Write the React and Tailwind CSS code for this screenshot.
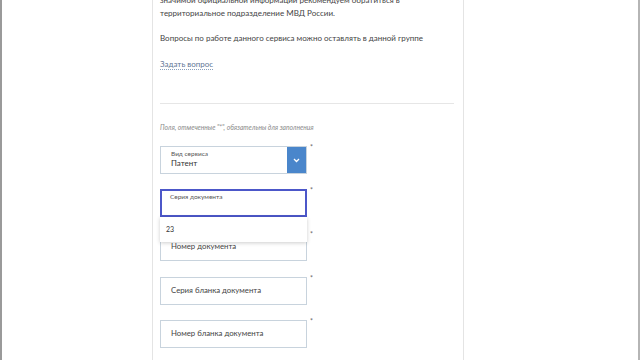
import React from 'react';

const font = { fontFamily: 'Lato, "Noto Sans", sans-serif' };

function Star() {
  return <span className="ml-[3px] -mt-[2px] text-[7px] leading-none text-[#666]">*</span>;
}

function Field({ label, className = '' }) {
  return (
    <div className={`flex items-start ${className}`}>
      <div className="w-[147px] h-[28px] border border-[#c8d3dd] bg-white flex items-center pl-[10px] text-[7.8px] text-[#444]">
        {label}
      </div>
      <Star />
    </div>
  );
}

export default function App() {
  return (
    <div className="w-[640px] h-[360px] overflow-hidden bg-white flex" style={font}>
      <div className="w-[152px] h-full border-l-2 border-[#9a9a9a]" />

      <div className="w-[312px] h-full border-l border-r border-[#e4e4e4] pl-[7px] pr-[9px] flex flex-col text-[#444]">
        <p className="mt-[-6px] text-[8px] leading-[13px] whitespace-nowrap">
          значимой официальной информации рекомендуем обратиться в<br />
          территориальное подразделение МВД России.
        </p>
        <p className="mt-[12px] text-[8px] leading-[13px] whitespace-nowrap">
          Вопросы по работе данного сервиса можно оставлять в данной группе
        </p>
        <div className="mt-[13px] text-[8px] leading-[13px]">
          <span className="text-[#5f7696] border-b border-dotted border-[#8aa0bc]">Задать вопрос</span>
        </div>

        <div className="mt-[32px] h-px bg-[#e6e6e6]" />

        <p className="mt-[18px] text-[6.7px] leading-[10px] italic text-[#8a8a8a]">
          Поля, отмеченные "*", обязательны для заполнения
        </p>

        {/* select */}
        <div className="mt-[14px] flex items-start">
          <div className="w-[147px] h-[28px] border border-[#c8d3dd] flex">
            <div className="flex-1 pl-[10px] pt-[2px] flex flex-col">
              <span className="text-[6.5px] leading-[9px] text-[#555]">Вид сервиса</span>
              <span className="text-[8px] leading-[11px] text-[#333]">Патент</span>
            </div>
            <div className="w-[19px] h-full bg-[#4a86cb] flex items-center justify-center">
              <svg width="7" height="5" viewBox="0 0 7 5">
                <path d="M1 1l2.5 2.5L6 1" fill="none" stroke="#fff" strokeWidth="1.3" />
              </svg>
            </div>
          </div>
          <Star />
        </div>

        {/* focused input with suggestion */}
        <div className="relative mt-[15px]">
          <div className="flex items-start">
            <div className="w-[147px] h-[28px] border-2 border-[#4c57c9] pl-[8px] pt-[1px] text-[6.5px] leading-[9px] text-[#555]">
              Серия документа
            </div>
            <Star />
          </div>
          <div className="absolute left-0 top-[28px] w-[147px] h-[25px] bg-white shadow-[0_1px_4px_rgba(0,0,0,0.2)] flex items-center pl-[6px] text-[7px] text-[#333] z-10">
            23
          </div>
          <Field label="Номер документа" className="mt-[16px]" />
        </div>

        <Field label="Серия бланка документа" className="mt-[16px]" />
        <Field label="Номер бланка документа" className="mt-[15px]" />
      </div>

      <div className="flex-1 h-full border-r-2 border-[#b5b5b5]" />
    </div>
  );
}
